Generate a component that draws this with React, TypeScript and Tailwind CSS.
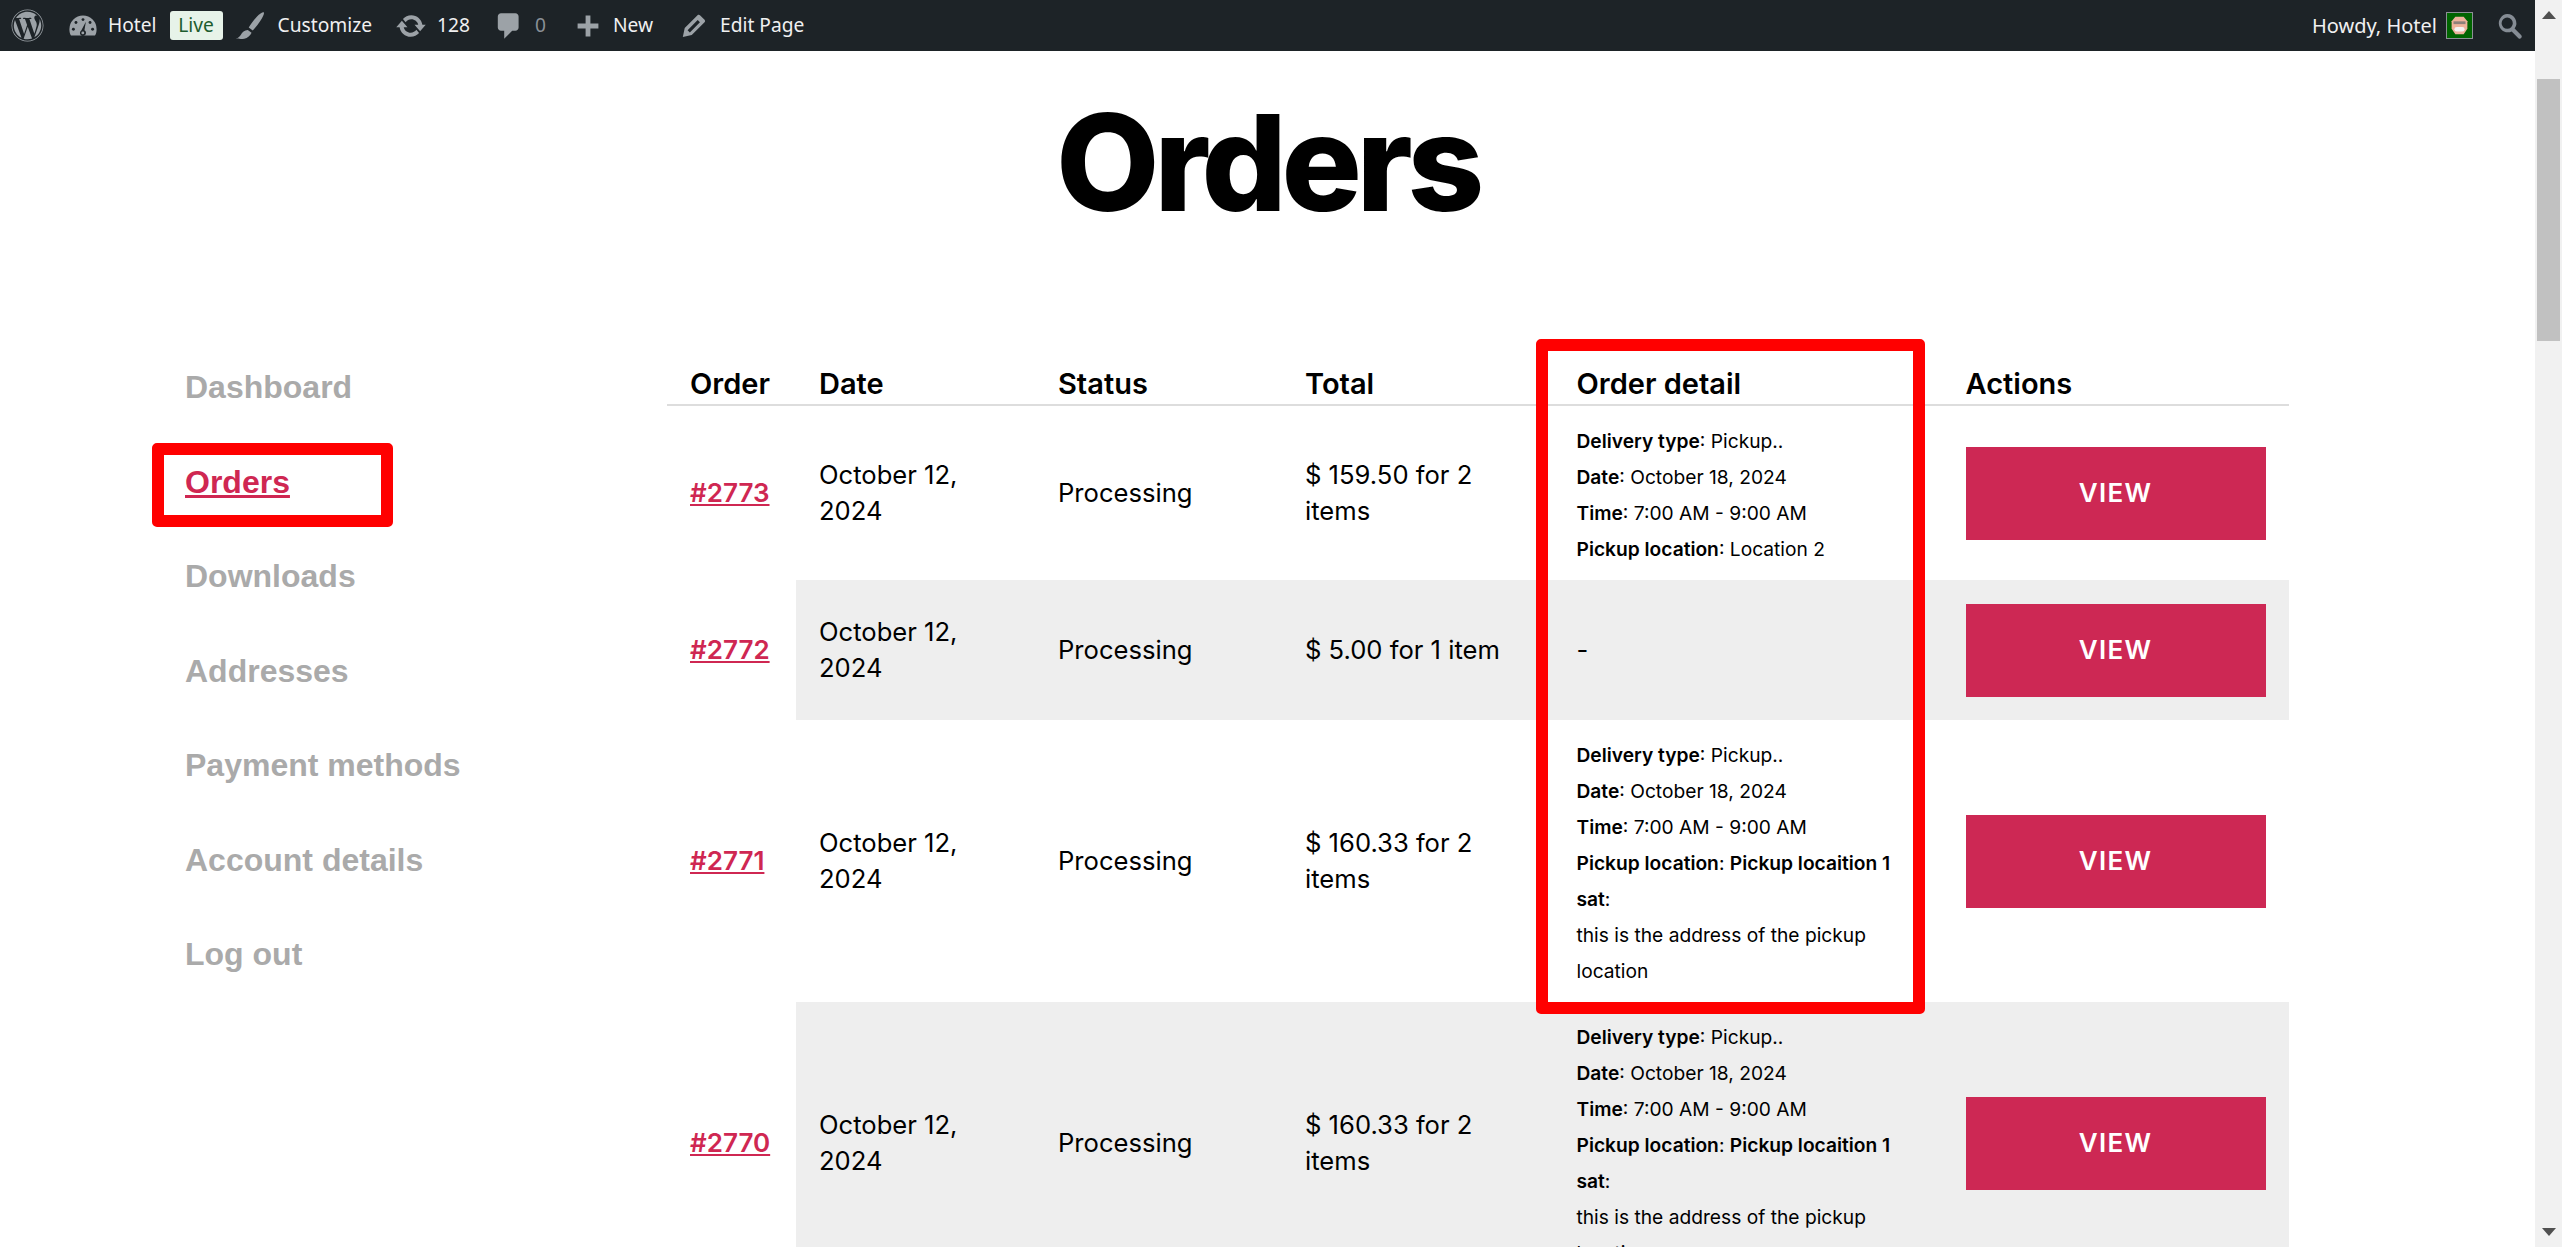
import { FaWordpress } from "react-icons/fa";

const orders = [
  { id: "#2773", total: "$ 159.50 for 2 items", h: "h-[175px]", detail: "short" },
  { id: "#2772", total: "$ 5.00 for 1 item", h: "h-[140px]", detail: "none" },
  { id: "#2771", total: "$ 160.33 for 2 items", h: "h-[282px]", detail: "long" },
  { id: "#2770", total: "$ 160.33 for 2 items", h: "h-[282px]", detail: "long" },
];

const menu = ["Dashboard", "Orders", "Downloads", "Addresses", "Payment methods", "Account details", "Log out"];

function Detail({ kind }: { kind: string }) {
  if (kind === "none") return <span className="text-[25.6px]">-</span>;
  return (
    <div className="pt-[3px] text-[19.2px] leading-[36px]">
      <div><b className="font-semibold">Delivery type</b>: Pickup..</div>
      <div><b className="font-semibold">Date</b>: October 18, 2024</div>
      <div><b className="font-semibold">Time</b>: 7:00 AM - 9:00 AM</div>
      {kind === "short" ? (
        <div><b className="font-semibold">Pickup location</b>: Location 2</div>
      ) : (
        <>
          <div><b className="font-semibold">Pickup location</b>: <b className="font-semibold">Pickup locaition 1 sat</b>:</div>
          <div>this is the address of the pickup location</div>
        </>
      )}
    </div>
  );
}

function AdminBar() {
  return (
    <header className="flex h-[51px] shrink-0 items-center justify-between bg-[#1d2327] font-['Noto_Sans',sans-serif] text-[19.2px] text-[#f0f0f1]">
      <div className="flex items-center">
        <FaWordpress className="ml-[11px] text-[33px] text-[#9ca2a7]" />
        <svg viewBox="0 0 20 20" className="ml-[23px] h-[32px] w-[32px]">
          <path className="fill-[#9ca2a7]" d="M10 3.500a8.500 8.500 0 0 0-8.500 8.500c0 1.500.3 2.900 1 4h15c.7-1.100 1-2.500 1-4A8.500 8.500 0 0 0 10 3.500z" />
          <g className="fill-[#1d2327]">
            <circle cx="10" cy="6" r=".9" />
            <circle cx="5.600" cy="7.800" r=".9" />
            <circle cx="14.400" cy="7.800" r=".9" />
            <circle cx="4" cy="12" r=".9" />
            <circle cx="16" cy="12" r=".9" />
            <path d="M11.800 7.400l-.9 5.300a1.900 1.900 0 1 1-2 .1z" />
          </g>
          <circle className="fill-[#9ca2a7]" cx="9.900" cy="14.300" r=".9" />
        </svg>
        <span className="ml-[9px]">Hotel</span>
        <span className="ml-[13px] h-[29px] w-[53px] rounded-[3px] bg-[#e7f3e9] text-center leading-[28px] text-[#1d5c2e]">Live</span>
        <svg viewBox="0 0 20 20" className="ml-[11px] h-[32px] w-[32px] fill-[#9ca2a7]">
          <path d="M18.700 1.500c.3.8-.7 3-2.200 5.200-1.500 2.200-3.300 4.600-4.800 6.100l-2.500-1.800c1.400-2.300 3.300-5 5.200-7 1.700-1.800 3.700-2.900 4.300-2.500z" />
          <path d="M8.600 12.500l2.400 1.700c-.8 1.800-2.500 3.400-4.600 3.700-2 .3-4 .1-5.100-.1 1.500-.5 2.300-1.200 3-2.400.8-1.500 2.200-2.800 4.300-2.900z" />
        </svg>
        <span className="ml-[12px]">Customize</span>
        <svg viewBox="0 0 20 20" className="ml-[23px] h-[32px] w-[32px] fill-[#9ca2a7]">
          <path d="M10.200 3.280c3.530 0 6.430 2.610 6.920 6h2.080l-3.500 4-3.500-4h2.320c-.45-1.970-2.210-3.440-4.320-3.440-1.450 0-2.730.71-3.540 1.780L4.950 5.660C6.230 4.200 8.110 3.280 10.200 3.280zm-.4 13.440c-3.520 0-6.430-2.610-6.920-6H.8l3.500-4c1.170 1.330 2.330 2.670 3.500 4H5.480c.45 1.970 2.210 3.440 4.320 3.440 1.450 0 2.730-.71 3.540-1.780l1.710 1.950c-1.280 1.460-3.150 2.390-5.250 2.390z" />
        </svg>
        <span className="ml-[10px]">128</span>
        <svg viewBox="0 0 20 20" className="ml-[23px] h-[32px] w-[32px] fill-[#9ca2a7]">
          <path d="M5 2h9c1.100 0 2 .9 2 2v7c0 1.100-.9 2-2 2h-2l-5 5v-5H5c-1.100 0-2-.9-2-2V4c0-1.100.9-2 2-2z" />
        </svg>
        <span className="ml-[10px] text-[#8a9096]">0</span>
        <svg viewBox="0 0 20 20" className="ml-[26px] h-[32px] w-[32px] fill-[#9ca2a7]">
          <path d="M8.500 3.500h3v5h5v3h-5v5h-3v-5h-5v-3h5z" />
        </svg>
        <span className="ml-[9px]">New</span>
        <svg viewBox="0 0 20 20" className="ml-[25px] h-[32px] w-[32px] fill-[#9ca2a7]">
          <path fillRule="evenodd" d="M13.900 3.400l2.700 2.700c.5.5.4 1.200 0 1.600l-8 8-5.600 1.200 1.200-5.600 8-8c.4-.4 1.200-.4 1.700.1zM12.300 6.300L6 12.600 7.400 14l6.300-6.300z" />
        </svg>
        <span className="ml-[10px]">Edit Page</span>
      </div>
      <div className="flex items-center">
        <span className="text-[20px]">Howdy, Hotel</span>
        <svg viewBox="0 0 27 27" className="ml-[9px] h-[27px] w-[27px] border border-[#8c8f94] bg-[#006400]">
          <path d="M9 4h9l4 5v8l-4 6H9l-4-6V9z" fill="#eeb39c" />
          <rect x="7" y="9" width="13" height="3" fill="#8d817b" />
          <rect x="8" y="15" width="11" height="5" rx="2.500" fill="#f4f4f4" />
        </svg>
        <svg viewBox="0 0 20 20" className="mr-[11px] ml-[23px] h-[28px] w-[28px] fill-[#858c94]">
          <path fillRule="evenodd" d="M8 1.500a6.500 6.500 0 0 1 5.300 10.300l4.800 4.800a1.500 1.500 0 0 1-2.100 2.100l-4.800-4.800A6.500 6.500 0 1 1 8 1.500zm0 2.500a4 4 0 1 0 0 8 4 4 0 0 0 0-8z" />
        </svg>
      </div>
    </header>
  );
}

export default function App() {
  return (
    <div className="flex h-[1247px] w-full overflow-hidden bg-white font-['Inter',sans-serif] text-black">
      <div className="flex min-w-0 flex-1 flex-col">
        <AdminBar />
        <main className="min-h-0 flex-1 overflow-hidden">
          <h1 className="pt-[27px] text-center text-[134px] leading-[168px] font-extrabold tracking-[-0.04em]">Orders</h1>
          <div className="mt-[112px] flex items-start">
            <nav className="ml-[185px] flex w-[482px] shrink-0 flex-col pt-[6px] font-['Liberation_Sans',sans-serif] text-[32px] font-bold text-[#aaaaaa]">
              {menu.map((item) => (
                <a
                  key={item}
                  className={
                    item === "Orders"
                      ? "relative h-[94.5px] leading-[46px] text-[#cf2752] underline"
                      : "h-[94.5px] leading-[46px]"
                  }
                >
                  {item}
                  {item === "Orders" && (
                    <span className="absolute top-[-15.5px] left-[-33px] h-[84px] w-[241px] rounded-[5px] border-[12px] border-[#ff0000]" />
                  )}
                </a>
              ))}
            </nav>
            <div className="relative w-[1622px] shrink-0">
              <table className="w-full table-fixed border-collapse text-left text-[25.6px] leading-[36px]">
                <colgroup>
                  <col className="w-[129px]" />
                  <col className="w-[239px]" />
                  <col className="w-[247px]" />
                  <col className="w-[271.5px]" />
                  <col className="w-[389px]" />
                  <col className="w-[346.5px]" />
                </colgroup>
                <thead>
                  <tr className="h-[47px] border-b-2 border-[#dddddd] text-[29px]">
                    {["Order", "Date", "Status", "Total", "Order detail", "Actions"].map((h) => (
                      <th key={h} className="px-[23px] pt-[6px] font-semibold whitespace-nowrap">{h}</th>
                    ))}
                  </tr>
                </thead>
                <tbody>
                  {orders.map((o, i) => (
                    <tr key={o.id} className={o.h}>
                      <th className="px-[23px] text-[26px] font-semibold">
                        <a className="text-[#cf2752] underline">{o.id}</a>
                      </th>
                      <td className={i % 2 ? "bg-[#eeeeee] px-[23px]" : "px-[23px]"}>October 12, 2024</td>
                      <td className={i % 2 ? "bg-[#eeeeee] px-[23px]" : "px-[23px]"}>Processing</td>
                      <td className={i % 2 ? "bg-[#eeeeee] px-[23px]" : "px-[23px]"}>{o.total}</td>
                      <td className={i % 2 ? "bg-[#eeeeee] px-[23px]" : "px-[23px]"}>
                        <Detail kind={o.detail} />
                      </td>
                      <td className={i % 2 ? "bg-[#eeeeee] pl-[23px]" : "pl-[23px]"}>
                        <button className="h-[93px] w-[300px] bg-[#cd2854] text-[26px] font-semibold tracking-[0.05em] text-white">VIEW</button>
                      </td>
                    </tr>
                  ))}
                </tbody>
              </table>
              <span className="absolute top-[-19px] left-[869px] h-[675px] w-[389px] rounded-[5px] border-[12px] border-[#ff0000]" />
            </div>
          </div>
        </main>
      </div>
      <aside className="flex w-[27px] shrink-0 flex-col items-center bg-[#f1f1f1]">
        <span className="mt-[11px] h-0 w-0 border-x-[7px] border-b-[8px] border-x-transparent border-b-[#505050]" />
        <span className="mt-[60px] h-[262px] w-[23px] bg-[#c1c1c1]" />
        <span className="mt-auto mb-[11px] h-0 w-0 border-x-[7px] border-t-[8px] border-x-transparent border-t-[#505050]" />
      </aside>
    </div>
  );
}
